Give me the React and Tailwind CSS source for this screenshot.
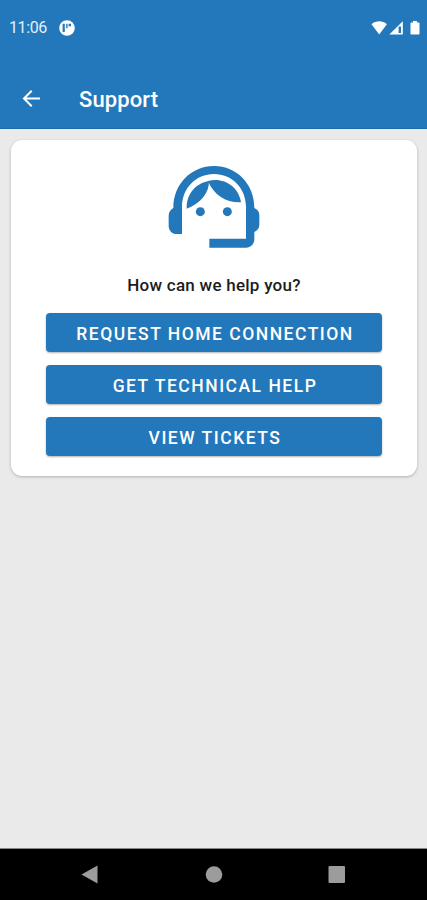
const actions = ["Request home connection", "Get technical help", "View tickets"];

function StatusBar() {
  return (
    <div className="flex h-[55px] items-center justify-between pl-[9px] pr-[6px] text-white">
      <div className="flex items-center gap-[12px]">
        <span className="w-[38px] whitespace-nowrap pt-[1px] text-[16px] leading-5 tracking-[-0.4px] text-[#e4effa]">11:06</span>
        <svg width="16" height="16" viewBox="0 0 16 16">
          <circle cx="8" cy="8" r="7.8" fill="#fff" />
          <path d="M3.600 3.800h2.200v8.200H3.600zM7.200 3.800h1.400v4.400H7.200zM9.600 3.800h2.400v2.400H9.600z" fill="#2278bb" />
        </svg>
      </div>
      <svg width="50" height="16" viewBox="0 0 50 16">
        <path d="M.5 4.200C2.800 2 5.500 1.200 8.200 1.200s5.400.8 7.700 3L8.200 14.400z" fill="#fff" />
        <path d="M31.800 1.200v13.200H18.300z" fill="#fff" />
        <path d="M27.600 6.500h2.400v6.500h-2.400z" fill="#2278bb" />
        <path d="M39.500 3.400c0-.7.4-1 1-1h1.500V1h4v1.400h1.500c.6 0 1 .3 1 1v10c0 .6-.4 1-1 1h-7c-.6 0-1-.4-1-1z" fill="#fff" />
      </svg>
    </div>
  );
}

function SupportIcon() {
  return (
    <svg className="ml-[2px] mt-[15px] shrink-0" width="120" height="105" viewBox="0 0 360 315" fill="#2278bb">
      {/* Headset */}
      <path d="M55 159C55 87 109 33 177 33s121 54 121 126c9 5 15 11 15 21v30c0 10-6 16-15 21v22c0 14-11 25-25 25H163v-27h110v-95c0-57-42-99-96-99S81 99 81 156v81H65c-14 0-24-11-24-25v-30c0-10 5-18 14-23z" />
      {/* Hair */}
      <path d="M95 161c-2-43 27-77 67-83 1 35-25 68-67 83z" />
      <path d="M159 78c47-12 91 16 99 64-44 2-82-22-99-64z" />
      {/* Eyes */}
      <circle cx="136" cy="170" r="13.500" />
      <circle cx="217" cy="170" r="13.500" />
    </svg>
  );
}

function App() {
  return (
    <div className="flex h-[900px] w-[427px] flex-col overflow-hidden bg-[#eaeaea] font-['Roboto',sans-serif]">
      <header className="h-[129px] shrink-0 border-b border-[#1d6dab] bg-[#2278bb]">
        <StatusBar />
        <div className="flex h-[73px] items-center pl-[22px] pt-[14px]">
          <svg width="19" height="18" viewBox="0 0 19 18" fill="none" stroke="#fff" strokeWidth="2">
            <path d="M18 8.500H2M9.700.8L2 8.500l7.700 7.700" />
          </svg>
          <h1 className="ml-[38px] pt-[2px] text-[22px] font-medium leading-7 tracking-[0.1px] text-white">Support</h1>
        </div>
      </header>

      <main className="flex-1 px-[11px] pr-[10px] pt-[11px]">
        <section className="flex h-[336px] flex-col items-center rounded-[11px] bg-white shadow-[0_1px_3px_rgba(0,0,0,0.25)]">
          <SupportIcon />
          <p className="mt-[13px] text-[17px] font-medium leading-6 tracking-[0.25px] text-[#1c1c1c]">How can we help you?</p>
          <div className="mt-[16px] flex w-[336px] flex-col gap-[13px]">
            {actions.map((label) => (
              <button
                key={label}
                className="h-[39px] whitespace-nowrap rounded-[4px] bg-[#2278bb] pl-[2px] pt-[2px] text-[17.500px] font-medium uppercase leading-6 tracking-[1.5px] text-white shadow-[0_1px_2px_rgba(0,0,0,0.3)]"
              >
                {label}
              </button>
            ))}
          </div>
        </section>
      </main>

      {/* Android navigation */}
      <nav className="h-[52px] shrink-0 border-t border-[#888] bg-black">
        <svg width="427" height="51" viewBox="0 0 427 51" fill="#9c9c9c">
          <path d="M81.500 25.500L97.500 16.500v18z" />
          <circle cx="214" cy="25.500" r="8.300" />
          <rect x="328.500" y="17" width="16.500" height="17" rx="1" />
        </svg>
      </nav>
    </div>
  );
}

export default App;
